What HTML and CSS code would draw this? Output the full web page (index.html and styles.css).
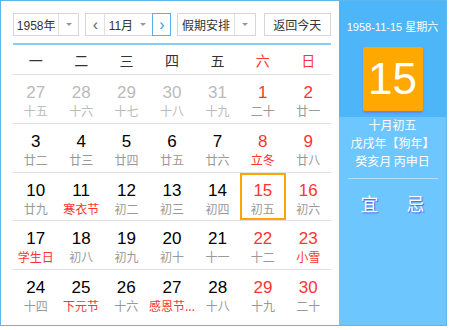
FILE: index.html
```html
<!DOCTYPE html>
<html lang="zh-CN">
<head>
  <meta charset="UTF-8">
  <title>万年历</title>
  <link rel="stylesheet" href="styles.css">
</head>
<body>
  <div class="calendar">
    <div class="main">
      <div class="toolbar">
        <div class="select year-select">
          <span class="select-text">1958年</span>
          <span class="select-arrow"></span>
        </div>
        <div class="select month-select">
          <span class="nav-btn">&lsaquo;</span>
          <span class="select-text">11月</span>
          <span class="select-arrow plain"></span>
          <span class="nav-btn active">&rsaquo;</span>
        </div>
        <div class="select holiday-select">
          <span class="select-text">假期安排</span>
          <span class="select-arrow"></span>
        </div>
        <div class="select today-btn">返回今天</div>
      </div>
      <div class="weekdays">
        <span>一</span><span>二</span><span>三</span><span>四</span><span>五</span>
        <span class="red">六</span><span class="red">日</span>
      </div>
      <div class="days" id="days"></div>
    </div>
    <div class="side">
      <div class="side-top">
        <div class="side-date">1958-11-15 星期六</div>
        <div class="big-day">15</div>
      </div>
      <div class="side-bottom">
        <div class="lunar-info">十月初五<br>戊戌年【狗年】<br>癸亥月 丙申日</div>
        <div class="side-line"></div>
        <div class="yi-ji"><span>宜</span><span>忌</span></div>
      </div>
    </div>
  </div>
  <script>
    const days = [
      ['27', '十五', 'old'], ['28', '十六', 'old'], ['29', '十七', 'old'], ['30', '十八', 'old'], ['31', '十九', 'old'], ['1', '二十', 'we'], ['2', '廿一', 'we'],
      ['3', '廿二'], ['4', '廿三'], ['5', '廿四'], ['6', '廿五'], ['7', '廿六'], ['8', '立冬', 'we fest'], ['9', '廿八', 'we'],
      ['10', '廿九'], ['11', '寒衣节', 'fest'], ['12', '初二'], ['13', '初三'], ['14', '初四'], ['15', '初五', 'we today'], ['16', '初六', 'we'],
      ['17', '学生日', 'fest'], ['18', '初八'], ['19', '初九'], ['20', '初十'], ['21', '十一'], ['22', '十二', 'we'], ['23', '小雪', 'we fest'],
      ['24', '十四'], ['25', '下元节', 'fest'], ['26', '十六'], ['27', '感恩节...', 'fest'], ['28', '十八'], ['29', '十九', 'we'], ['30', '二十', 'we']
    ];
    const box = document.getElementById('days');
    for (let r = 0; r < 5; r++) {
      const row = document.createElement('div');
      row.className = 'week';
      for (let c = 0; c < 7; c++) {
        const d = days[r * 7 + c];
        const cell = document.createElement('div');
        cell.className = 'day ' + (d[2] || '');
        cell.innerHTML = `<span class="num">${d[0]}</span><span class="lunar">${d[1]}</span>`;
        row.appendChild(cell);
      }
      box.appendChild(row);
    }
  </script>
</body>
</html>
```

FILE: styles.css
```css
body {
  margin: 0;
  font-family: "Liberation Sans", "Noto Sans CJK SC", sans-serif;
  background: #fff;
}
.calendar {
  width: 447px;
  height: 326px;
  box-sizing: border-box;
  border: 1px solid #5ab7ef;
  display: flex;
}
.main {
  width: 338px;
  box-sizing: border-box;
  padding: 12px 8px 0 12px;
  background: #fff;
}
.toolbar {
  display: flex;
  height: 23px;
  gap: 6px;
  padding-bottom: 7px;
  border-bottom: 2px solid #87cef5;
}
.select {
  display: flex;
  align-items: center;
  box-sizing: border-box;
  height: 23px;
  border: 1px solid #d6d6d6;
  font-size: 12px;
  color: #333;
  background: #fff;
}
.select-text {
  flex: 1;
  text-align: center;
}
.select-arrow {
  width: 19px;
  height: 100%;
  border-left: 1px solid #e2e2e2;
  position: relative;
}
.select-arrow::after {
  content: "";
  position: absolute;
  left: 7px;
  top: 9px;
  border-left: 3px solid transparent;
  border-right: 3px solid transparent;
  border-top: 3px solid #999;
}
.select-arrow.plain {
  border-left: none;
  width: 16px;
}
.select-arrow.plain::after {
  left: 4px;
}
.year-select {
  width: 67px;
}
.month-select {
  width: 87px;
}
.holiday-select {
  width: 79px;
}
.holiday-select .select-arrow {
  width: 20px;
}
.today-btn {
  width: 68px;
  margin-left: 2px;
  justify-content: center;
}
.nav-btn {
  width: 19px;
  height: 100%;
  display: flex;
  align-items: center;
  justify-content: center;
  font-size: 16px;
  color: #666;
  box-sizing: border-box;
}
.nav-btn:first-child {
  border-right: 1px solid #e2e2e2;
}
.nav-btn.active {
  color: #2f9ee8;
  border: 1px solid #53b3f2;
  height: 23px;
  margin-right: -1px;
}
.weekdays {
  display: grid;
  grid-template-columns: repeat(7, 1fr);
  height: 29px;
  align-items: center;
  text-align: center;
  font-family: "Noto Sans CJK SC", sans-serif;
  font-size: 14px;
  color: #333;
  border-bottom: 1px solid #e1e1e1;
}
.red {
  color: #f33;
}
.week {
  display: grid;
  grid-template-columns: repeat(7, 1fr);
  height: 48.5px;
  box-sizing: border-box;
  border-top: 1px solid #e1e1e1;
}
.week:first-child {
  border-top: none;
  height: 48px;
}
.day {
  display: flex;
  flex-direction: column;
  align-items: center;
  box-sizing: border-box;
  padding-top: 8px;
}
.num {
  font-size: 17px;
  line-height: 20px;
  color: #000;
}
.lunar {
  font-family: "Noto Sans CJK SC", sans-serif;
  font-size: 12px;
  line-height: 16px;
  color: #999;
  white-space: nowrap;
}
.day.old .num,
.day.old .lunar {
  color: #bbb;
}
.day.we .num,
.day.fest .lunar {
  color: #f33;
}
.day.today {
  border: 2px solid #ffa400;
  padding-top: 6px;
}
.side {
  flex: 1;
  display: flex;
  flex-direction: column;
  background: #6ec6ff;
  color: #fff;
  text-align: center;
}
.side-top {
  height: 116px;
  background: #4db6f8;
  display: flex;
  flex-direction: column;
  align-items: center;
}
.side-date {
  font-size: 11px;
  margin-top: 17px;
  line-height: 18px;
}
.big-day {
  width: 60px;
  height: 64px;
  margin-top: 11px;
  background: #ffa800;
  border-radius: 2px;
  box-shadow: 0 2px 2px #6f7ff0;
  font-size: 44px;
  line-height: 64px;
}
.lunar-info {
  font-family: "Noto Sans CJK SC", sans-serif;
  font-size: 12px;
  line-height: 18px;
  margin-top: -1px;
}
.side-line {
  height: 1px;
  margin: 8px 8px 0 9px;
  background: rgba(255, 255, 255, 0.45);
}
.yi-ji {
  display: flex;
  justify-content: center;
  gap: 28px;
  margin-top: 13px;
  font-family: "Noto Sans CJK SC", sans-serif;
  font-size: 18px;
  line-height: 22px;
  text-shadow: 1px 1px 1px #4a5fe8;
}
```
